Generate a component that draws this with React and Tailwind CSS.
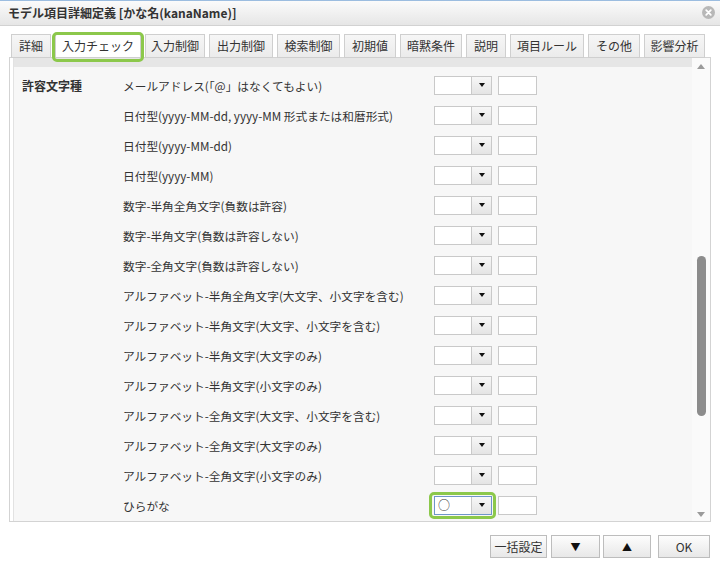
import React from "react";

const rows = [
  "メールアドレス(「@」はなくてもよい)",
  "日付型(yyyy-MM-dd, yyyy-MM 形式または和暦形式)",
  "日付型(yyyy-MM-dd)",
  "日付型(yyyy-MM)",
  "数字-半角全角文字(負数は許容)",
  "数字-半角文字(負数は許容しない)",
  "数字-全角文字(負数は許容しない)",
  "アルファベット-半角全角文字(大文字、小文字を含む)",
  "アルファベット-半角文字(大文字、小文字を含む)",
  "アルファベット-半角文字(大文字のみ)",
  "アルファベット-半角文字(小文字のみ)",
  "アルファベット-全角文字(大文字、小文字を含む)",
  "アルファベット-全角文字(大文字のみ)",
  "アルファベット-全角文字(小文字のみ)",
  "ひらがな",
];

const tabs = [
  { label: "詳細", w: "w-[40px]" },
  { label: "入力チェック", w: "w-[86px]", active: true },
  { label: "入力制御", w: "w-[60px]" },
  { label: "出力制御", w: "w-[64px]" },
  { label: "検索制御", w: "w-[63px]" },
  { label: "初期値", w: "w-[52px]" },
  { label: "暗黙条件", w: "w-[62px]" },
  { label: "説明", w: "w-[40px]" },
  { label: "項目ルール", w: "w-[74px]" },
  { label: "その他", w: "w-[52px]" },
  { label: "影響分析", w: "w-[61px]" },
];

function Select({ value, focused }) {
  return (
    <div className="relative">
      {focused && (
        <span className="absolute -left-[5px] -right-[4px] -top-[4px] -bottom-[4px] border-[3px] border-[#8cc84b] rounded-[5px]" />
      )}
      <div
        className={
          "relative flex w-[58px] h-[19px] bg-white border " +
          (focused ? "border-[#6f95c9]" : "border-[#c9c9c9]")
        }
      >
        <div className="flex-1 flex items-center pl-[3px] text-[12px] leading-none text-[#333]">
          {value}
        </div>
        <div className="w-[20px] flex items-center justify-center border-l border-[#c9c9c9] bg-gradient-to-b from-[#f7f7f7] to-[#e4e4e4]">
          <span className="w-0 h-0 border-l-[3px] border-r-[3px] border-t-[4px] border-l-transparent border-r-transparent border-t-[#111]" />
        </div>
      </div>
    </div>
  );
}

export default function App() {
  return (
    <div className="w-[720px] h-[561px] bg-white flex flex-col overflow-hidden text-[#333] font-['Noto_Sans_CJK_JP','Noto_Sans',sans-serif]">
      {/* Title bar */}
      <div className="h-[26px] shrink-0 border-t border-[#9cbde0] border-b border-b-[#d2d2d2] bg-gradient-to-b from-[#fbfbfb] to-[#e6e6e6] flex items-center justify-between pl-[8px] pr-[5px]">
        <div className="text-[12px] font-bold leading-none text-[#333]">
          モデル項目詳細定義 [かな名(kanaName)]
        </div>
        <svg width="13" height="13" viewBox="0 0 13 13" className="-mt-[2px]">
          <circle cx="6.5" cy="6.5" r="6.5" fill="#b8b8b8" />
          <path d="M4.2 4.2 L8.8 8.8 M8.8 4.2 L4.2 8.8" stroke="#fff" strokeWidth="1.8" strokeLinecap="round" />
        </svg>
      </div>

      {/* Tabs */}
      <div className="mt-[8px] pl-[11px] flex gap-[4px] h-[24px] shrink-0 relative z-10">
        {tabs.map((t) => (
          <div key={t.label} className={"relative " + t.w}>
            {t.active && (
              <span className="absolute -left-[3px] -right-[3px] -top-[2px] -bottom-[4px] border-[3px] border-[#8cc84b] rounded-[5px]" />
            )}
            <div
              className={
                "h-full flex items-center justify-center text-[12px] leading-none border " +
                (t.active
                  ? "bg-white border-[#cfcfcf] h-[25px]"
                  : "bg-gradient-to-b from-[#f6f6f6] to-[#ebebeb] border-[#cfcfcf]")
              }
            >
              {t.label}
            </div>
          </div>
        ))}
      </div>

      {/* Panel */}
      <div className="-mt-px mx-[9px] h-[465px] shrink-0 border border-[#d3d3d3] bg-white flex">
        <div className="flex-1 ml-[3px] border-l border-[#e2e2e2] flex flex-col overflow-hidden">
          <div className="h-[9px] shrink-0 bg-[#e6e6e6]" />
          <div className="flex-1 bg-[#f7f7f7] pt-[3px] overflow-hidden">
            {rows.map((r, i) => (
              <div key={r} className="flex items-center h-[30px]">
                <div className="w-[109px] pl-[8px] pt-[2px] text-[12px] font-bold leading-none">
                  {i === 0 ? "許容文字種" : ""}
                </div>
                <div className="w-[311px] pt-[2px] text-[11.7px] leading-none whitespace-nowrap">{r}</div>
                <Select value={i === rows.length - 1 ? "○" : ""} focused={i === rows.length - 1} />
                <div className="ml-[6px] w-[39px] h-[19px] bg-white border border-[#c9c9c9]" />
              </div>
            ))}
          </div>
        </div>
        <div className="w-[18px] shrink-0 bg-[#fafafa] flex flex-col items-center pt-[6px] pb-[4px]">
          <span className="w-0 h-0 border-l-[4px] border-r-[4px] border-b-[5px] border-l-transparent border-r-transparent border-b-[#9a9a9a]" />
          <div className="mt-[187px] w-[9px] h-[160px] rounded-full bg-[#8c8c8c]" />
          <div className="flex-1" />
          <span className="w-0 h-0 border-l-[4px] border-r-[4px] border-t-[5px] border-l-transparent border-r-transparent border-t-[#9a9a9a]" />
        </div>
      </div>

      {/* Buttons */}
      <div className="mt-[13px] flex justify-end pr-[10px] text-[12px]">
        <button className="w-[57px] h-[23px] border border-[#bdbdbd] bg-gradient-to-b from-[#fdfdfd] to-[#e8e8e8] leading-none text-[#333]">
          一括設定
        </button>
        <button className="ml-[4px] w-[49px] h-[23px] border border-[#bdbdbd] bg-gradient-to-b from-[#fdfdfd] to-[#e8e8e8] leading-none text-[10px] text-[#111]">
          ▼
        </button>
        <button className="ml-[3px] w-[48px] h-[23px] border border-[#bdbdbd] bg-gradient-to-b from-[#fdfdfd] to-[#e8e8e8] leading-none text-[10px] text-[#111]">
          ▲
        </button>
        <button className="ml-[7px] w-[52px] h-[23px] border border-[#bdbdbd] bg-gradient-to-b from-[#fdfdfd] to-[#e8e8e8] leading-none text-[#333]">
          OK
        </button>
      </div>
    </div>
  );
}
